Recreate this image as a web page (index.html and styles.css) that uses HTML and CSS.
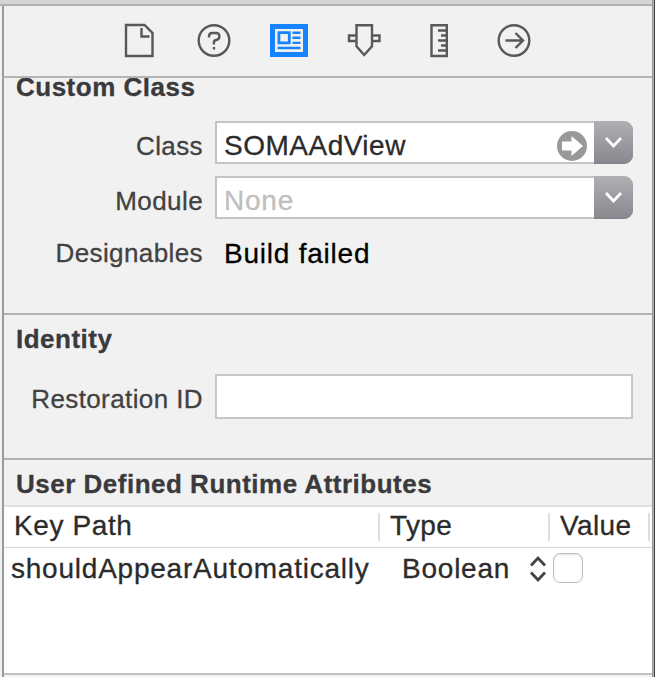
FILE: index.html
```
<!DOCTYPE html>
<html lang="en">
<head>
<meta charset="utf-8">
<title>Identity Inspector</title>
<link rel="stylesheet" href="styles.css">
</head>
<body>
<div class="topbar"></div>
<nav class="toolbar">
  <svg class="icon" viewBox="0 0 38 38"><path d="M6 4h18.500l8 8v23H6z"/><path d="M21.500 7v8.500h8"/></svg>
  <svg class="icon" viewBox="0 0 38 38"><circle cx="19" cy="19.500" r="15.300"/><path d="M14 16.500v-1.200q0-3.300 3.300-3.300h3.700q3.400 0 3.400 3.300t-3.400 3.700q-2.100.5-2.100 2.300v2.200"/><path d="M19 26v2.500"/></svg>
  <svg class="icon" viewBox="0 0 38 38"><path class="blue" d="M0 3h38v33H0z"/><path class="white" d="M5 8h28v23H5z"/><path class="blue" d="M7.500 10.200h13.200v13H7.500zM22.500 10.500h8v2.400h-8zM22.500 15.500h8v2.400h-8zM22.500 20.700h8v2.400h-8zM7.500 25.800h23v2.500h-23z"/><path class="white" d="M10.300 13h7.600v7.500h-7.600z"/></svg>
  <svg class="icon" viewBox="0 0 38 38"><path d="M11.500 4.200h15.500v21L19.200 34l-7.700-8.800z"/><path d="M11.500 14.500H4v5.500h7.500M27 14.500h7.500v5.500H27"/></svg>
  <svg class="icon" viewBox="0 0 38 38"><path d="M11.500 4.200h15.300v30.800H11.500z"/><path d="M18 9.500h8M21 14.500h5M18 19.500h8M21 24.500h5M18 29.500h8"/></svg>
  <svg class="icon" viewBox="0 0 38 38"><circle cx="19" cy="19.500" r="15.300"/><path d="M10.500 19.500h17M20.500 12l7.500 7.500-7.500 7.500"/></svg>
</nav>
<main class="panel">
  <section class="group custom">
    <h2 class="title">Custom Class</h2>
    <div class="row"><label class="label">Class</label>
      <div class="combo"><span class="text soma">SOMAAdView</span>
        <svg class="jump" viewBox="0 0 30 30"><circle cx="15" cy="15" r="15"/><path d="M5 10.500h9.500V5L26 15 14.500 25v-5.500H5z"/></svg>
        <span class="drop"><svg viewBox="0 0 38 42"><path d="M12 17l7.500 8 7.500-8"/></svg></span>
      </div>
    </div>
    <div class="row"><label class="label">Module</label>
      <div class="combo"><span class="text none">None</span>
        <span class="drop"><svg viewBox="0 0 38 42"><path d="M12 17l7.500 8 7.500-8"/></svg></span>
      </div>
    </div>
    <div class="row last"><label class="label">Designables</label><span class="text status">Build failed</span></div>
  </section>
  <section class="group identity">
    <h2 class="title">Identity</h2>
    <div class="row"><label class="label restoration">Restoration ID</label><div class="field"></div></div>
  </section>
  <section class="attributes">
    <h2 class="title">User Defined Runtime Attributes</h2>
    <div class="thead"><span class="th key">Key Path</span><span class="th type">Type</span><span class="th value">Value</span></div>
    <div class="tr"><span class="keypath">shouldAppearAutomatically</span><span class="bool">Boolean</span>
      <svg class="stepper" viewBox="0 0 18 28"><path d="M2 10.500L9 3l7 7.500M2 17.500L9 25l7-7.500"/></svg>
      <span class="checkbox"></span>
    </div>
  </section>
  <div class="bottom"></div>
</main>
<div class="edge"></div>
</body>
</html>
```
FILE: styles.css
```
* { box-sizing: border-box; }
body {
  margin: 0;
  width: 655px;
  height: 677px;
  overflow: hidden;
  background: #f1f1f1;
  font-family: "Liberation Sans", Arial, sans-serif;
  font-size: 28px;
  letter-spacing: 0.77px;
  -webkit-text-stroke: 0.3px currentColor;
  color: #2b2b2b;
  white-space: nowrap;
  display: grid;
  grid-template: 6px 72px 599px / 652px 3px;
}
.topbar {
  background: #d5d5d5;
  border-bottom: 2px solid #b2b2b2;
}
.toolbar {
  display: flex;
  gap: 37px;
  margin-left: 2px;
  padding: 15px 0 0 116px;
  border-left: 2px solid #999b99;
  border-bottom: 2px solid #b3b5b3;
}
.icon {
  width: 38px;
  height: 38px;
  fill: none;
  stroke: #585858;
  stroke-width: 2.4;
}
.icon .blue { fill: #1683ff; stroke: none; }
.icon .white { fill: #f1f1f1; stroke: none; }
.panel {
  margin-left: 2px;
  border-left: 2px solid #999b99;
}
.edge {
  grid-column: 2;
  grid-row: 1 / 4;
  background: linear-gradient(90deg, #979797 0 1px, #b2b2b2 1px 2px, #3d3d3d 2px);
}
.topbar, .toolbar, .panel { grid-column: 1; }
.title {
  margin: 0;
  padding-left: 12px;
  font-size: 26px;
  line-height: 30px;
  color: #3a3a3c;
  letter-spacing: 0.5px;
}
.group { border-bottom: 2px solid #b2b2b2; }
.custom { height: 237px; overflow: hidden; }
.custom .title { margin-top: -6px; height: 49px; }
.row { display: flex; height: 55px; }
.label {
  width: 199px;
  margin-right: 12px;
  text-align: right;
  font-size: 26px;
  line-height: 49px;
  padding-top: 1px;
  letter-spacing: 0.4px;
  color: #414141;
}
.combo {
  position: relative;
  display: flex;
  width: 418px;
  height: 43px;
  background: #fff;
  border: 2px solid #c4c4c4;
  border-radius: 0 9px 9px 0;
}
.text { padding-left: 7px; line-height: 46px; }
.soma { letter-spacing: 0.5px; }
.none { color: #bfbfbf; }
.jump {
  position: absolute;
  left: 340px;
  top: 8px;
  width: 30px;
  height: 30px;
  fill: #999;
}
.jump path { fill: #fff; }
.drop {
  margin: -2px -2px -2px auto;
  width: 39px;
  height: 43px;
  border-radius: 0 9px 9px 0;
  background: linear-gradient(#b0afb4, #89888e);
  border-bottom: 1px solid #808084;
}
.drop svg {
  display: block;
  width: 38px;
  height: 42px;
  fill: none;
  stroke: #fff;
  stroke-width: 2.8;
}
.last .label { line-height: 45px; padding-top: 0; }
.last .status { line-height: 45px; padding-left: 9px; color: #000; }
.identity { height: 145px; }
.identity .title { padding-top: 9px; height: 59px; }
.identity .label { padding-top: 0; line-height: 50px; }
.field {
  width: 418px;
  height: 45px;
  background: #fff;
  border: 2px solid #c6c6c6;
}
.attributes { height: 213px; background: #fff; }
.attributes .title {
  height: 47px;
  padding-top: 9px;
  background: #f1f1f1;
  border-bottom: 2px solid #dfdfdf;
}
.thead {
  display: flex;
  height: 41px;
  border-bottom: 1px solid #d5d5d5;
  line-height: 37px;
  letter-spacing: 0.4px;
}
.th { position: relative; height: 37px; padding-left: 10px; }
.key { letter-spacing: 0.6px; }
.th::after {
  content: "";
  position: absolute;
  right: 0;
  top: 6px;
  width: 2px;
  height: 28px;
  background: #dfdfdf;
}
.key { width: 376px; }
.type { width: 170px; }
.value { width: 100px; }
.tr { display: flex; padding-left: 7px; line-height: 42px; }
.keypath { width: 391px; }
.bool { width: 127px; }
.stepper {
  width: 18px;
  height: 28px;
  margin: 7px 6px 0 0;
  fill: none;
  stroke: #444;
  stroke-width: 2.8;
}
.checkbox {
  width: 30px;
  height: 30px;
  margin-top: 5px;
  border: 1.5px solid #bcbcbc;
  border-radius: 7px;
  box-shadow: inset 0 1px 2px #e2e2e2;
}
.bottom { height: 4px; background: #f1f1f1; border-top: 2px solid #c2c2c2; }
```
